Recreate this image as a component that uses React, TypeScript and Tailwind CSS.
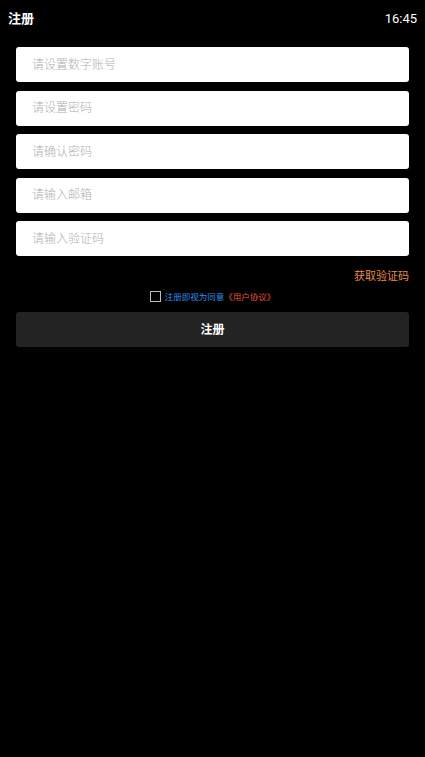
import * as React from "react";

const fields = ["请设置数字账号", "请设置密码", "请确认密码", "请输入邮箱", "请输入验证码"];

export default function App() {
  return (
    <div
      className="min-h-[757px] w-full bg-black text-white"
      style={{ fontFamily: '"Roboto", "Noto Sans CJK SC", sans-serif' }}
    >
      <header className="flex h-[38px] items-center justify-between px-2">
        <h1 className="text-[13px] font-bold">注册</h1>
        <span className="text-[13px]">16:45</span>
      </header>

      <div className="mt-[9px] flex flex-col gap-[8.5px] px-4">
        {fields.map((f) => (
          <input
            key={f}
            placeholder={f}
            className="h-[35px] w-full rounded-[3px] bg-white px-4 text-[12px] font-light text-black outline-none placeholder:text-[#b0b0b0]"
          />
        ))}
      </div>

      <div className="mt-[13px] flex justify-end px-4">
        <button className="text-[11px] text-[#e98c4a]">获取验证码</button>
      </div>

      <label className="mt-[5px] flex items-center justify-center gap-[4px] text-[8.5px]">
        <span className="h-[11px] w-[11px] border border-[#bbbbbb]" />
        <span className="text-[#2f8fe6]">注册即视为同意</span>
        <span className="-ml-[4px] text-[#e0553a]">《用户协议》</span>
      </label>

      <div className="mt-[9px] px-4">
        <button className="h-[35px] w-full rounded-[3px] bg-[#232323] text-[12px] font-bold text-white">
          注册
        </button>
      </div>
    </div>
  );
}
